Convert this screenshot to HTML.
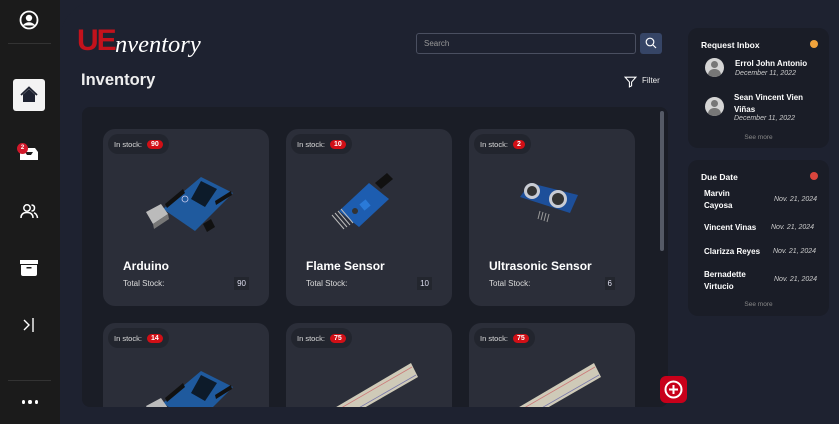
<!DOCTYPE html>
<html><head><meta charset="utf-8"><style>
*{margin:0;padding:0;box-sizing:border-box}
html,body{width:839px;height:424px;overflow:hidden}
body{background:#1e2230;font-family:"Liberation Sans",sans-serif;color:#fff;position:relative}
.abs{position:absolute}
.side{left:0;top:0;width:60px;height:424px;background:#1b1b1b}
.main{left:60px;top:0;width:779px;height:424px;background:#1e2230;border-top-left-radius:40px}
.hr{left:8px;width:43px;height:1px;background:#333}
.panel{left:82px;top:107px;width:586px;height:300px;background:#1a1d26;border-radius:8px;overflow:hidden}
.card{position:absolute;width:166px;height:177px;background:#2b2e39;border-radius:12px}
.pill{position:absolute;left:5px;top:5px;height:20px;padding:0 6px;background:#22252e;border-radius:10px;font-size:7.5px;display:flex;align-items:center;gap:5px;color:#ddd}
.pill b{background:#d10f16;color:#fff;border-radius:7px;padding:1px 4px;font-size:7px}
.ct{position:absolute;left:20px;top:130px;font-size:12px;font-weight:bold}
.ts{position:absolute;left:20px;top:150px;font-size:8px;color:#ddd;width:126px}
.ts span{position:absolute;right:0;top:-2px;background:#23262e;padding:2px 3px;color:#dde}
.rp{left:688px;width:141px;background:#1a1d27;border-radius:10px}
.rh{position:absolute;left:13px;font-size:8.5px;font-weight:bold}
.dot{position:absolute;right:11px;width:8px;height:8px;border-radius:50%}
.nm{position:absolute;font-size:8px;font-weight:bold;line-height:12px}
.dt{position:absolute;font-size:7px;font-style:italic;color:#ccc}
.av{position:absolute;left:17px;width:19px;height:19px;border-radius:50%;background:#d5d5d5;overflow:hidden}
.av:before{content:"";position:absolute;left:6px;top:3px;width:7px;height:7px;border-radius:50%;background:#777}
.av:after{content:"";position:absolute;left:3px;top:11px;width:13px;height:10px;border-radius:6px 6px 0 0;background:#777}
.sm{position:absolute;width:100%;text-align:center;font-size:6.5px;color:#888}
</style></head><body>
<div class="abs side"></div>
<div class="abs main"></div>
<div class="abs hr" style="top:43px"></div>
<div class="abs hr" style="top:380px"></div>
<svg class="abs" style="left:19px;top:10px" width="20" height="20" viewBox="0 0 20 20"><circle cx="10" cy="10" r="8.5" fill="none" stroke="#fff" stroke-width="1.8"/><circle cx="10" cy="8" r="3.2" fill="#fff"/><path d="M4.5 15.5Q10 10.5 15.5 15.5" fill="#fff" stroke="#fff" stroke-width="1.5"/></svg>
<div class="abs" style="left:13px;top:79px;width:32px;height:32px;background:#f3f3f3;border-radius:3px"></div>
<svg class="abs" style="left:19px;top:85px" width="20" height="20" viewBox="0 0 20 20"><path d="M2 10L10 2.5 18 10" fill="none" stroke="#1e2230" stroke-width="1.8"/><path d="M4 9.5V17H16V9.5L10 4Z" fill="#1e2230"/></svg>
<svg class="abs" style="left:19px;top:143px" width="20" height="20" viewBox="0 0 20 20"><path d="M1 9L4 5H16L19 9V17H1Z" fill="#fff"/><path d="M6 9H14L12 12H8Z" fill="#1b1b1b"/></svg>
<div class="abs" style="left:17px;top:143px;width:11px;height:11px;border-radius:50%;background:#d1182a;font-size:6px;font-weight:bold;text-align:center;line-height:11px">2</div>
<svg class="abs" style="left:19px;top:201px" width="20" height="20" viewBox="0 0 20 20" fill="none" stroke="#fff" stroke-width="1.5"><circle cx="8" cy="7" r="3.2"/><path d="M2 17Q2 11.5 8 11.5T14 17"/><path d="M12.5 4Q15.5 4 15.5 7T12.5 10M15 11.8Q18 12.8 18.5 17"/></svg>
<svg class="abs" style="left:19px;top:258px" width="20" height="20" viewBox="0 0 20 20"><rect x="1" y="2" width="18" height="4" fill="#fff"/><path d="M2 7H18V16Q18 18 16 18H4Q2 18 2 16Z" fill="#fff"/><rect x="7.5" y="9" width="5" height="1.5" fill="#1b1b1b"/></svg>
<svg class="abs" style="left:22px;top:316px" width="14" height="18" viewBox="0 0 14 18" fill="none" stroke="#fff" stroke-width="1.4"><path d="M2 4L7 9 2 14"/><path d="M11 2V16"/></svg>
<div class="abs" style="left:22px;top:400px;width:16px;height:6px;display:flex;gap:3px"><i style="width:4px;height:4px;border-radius:50%;background:#fff"></i><i style="width:4px;height:4px;border-radius:50%;background:#fff"></i><i style="width:4px;height:4px;border-radius:50%;background:#fff"></i></div>

<div class="abs" style="left:77px;top:25px;font-size:30px;font-weight:bold;color:#c3121c;letter-spacing:-2px;line-height:32px">UE</div>
<div class="abs" style="left:115px;top:31px;font-family:'Liberation Serif',serif;font-style:italic;font-size:24.5px;line-height:28px;color:#fff">nventory</div>
<div class="abs" style="left:81px;top:71px;font-size:16.5px;font-weight:bold;color:#eee">Inventory</div>
<div class="abs" style="left:416px;top:33px;width:220px;height:21px;border:1px solid #4a4f60;border-radius:3px;font-size:8px;color:#999;padding:5px 7px">Search</div>
<div class="abs" style="left:640px;top:33px;width:22px;height:21px;background:#364566;border-radius:3px"></div>
<svg class="abs" style="left:645px;top:37px" width="12" height="12" viewBox="0 0 12 12" fill="none" stroke="#fff" stroke-width="1.2"><circle cx="5" cy="5" r="3.8"/><path d="M8 8L11 11"/></svg>
<svg class="abs" style="left:624px;top:75px" width="13" height="13" viewBox="0 0 12 12" fill="none" stroke="#fff" stroke-width="1"><path d="M1 2H11L7 6.5V10L5 11V6.5Z"/></svg>
<div class="abs" style="left:642px;top:76px;font-size:8px;color:#eee">Filter</div>

<div class="abs panel">
 <div class="abs" style="left:578px;top:4px;width:4px;height:140px;background:#555a66;border-radius:2px"></div>
 <div class="card" style="left:21px;top:22px">
  <div class="pill">In stock: <b>90</b></div>
  <svg class="abs" style="left:40px;top:40px" width="92" height="75" viewBox="0 0 92 75"><path d="M20 40L58 8L90 24L52 62Z" fill="#1f5a9e"/><path d="M22 35L40 20L42 24L24 39Z" fill="#111"/><path d="M58 12L74 20L62 38L48 30Z" fill="#0d1b2a"/><path d="M72 32L88 22L89 26L73 36Z" fill="#111"/><path d="M3 43L18 35L25 45L10 55Z" fill="#bbb"/><path d="M10 55L25 45L26 50L11 60Z" fill="#777"/><path d="M60 55L68 50L72 58L64 63Z" fill="#111"/><circle cx="42" cy="30" r="3" fill="none" stroke="#cce" stroke-width=".8"/></svg>
  <div class="ct">Arduino</div>
  <div class="ts">Total Stock:<span>90</span></div>
 </div>
 <div class="card" style="left:204px;top:22px">
  <div class="pill">In stock: <b>10</b></div>
  <svg class="abs" style="left:45px;top:40px" width="70" height="70" viewBox="0 0 70 70"><path d="M8 42L38 14L58 30L28 58Z" fill="#1d5db0"/><path d="M44 14L56 4L62 10L50 20Z" fill="#111"/><rect x="30" y="32" width="8" height="8" fill="#2a7ad8" transform="rotate(-40 34 36)"/><circle cx="24" cy="42" r="3" fill="#333"/><path d="M4 44L16 58M7 42L19 56M10 40L22 54M1 46L13 60" stroke="#bbb" stroke-width="1"/></svg>
  <div class="ct">Flame Sensor</div>
  <div class="ts">Total Stock:<span>10</span></div>
 </div>
 <div class="card" style="left:387px;top:22px">
  <div class="pill">In stock: <b>2</b></div>
  <svg class="abs" style="left:47px;top:48px" width="70" height="50" viewBox="0 0 70 50"><path d="M4 20L14 6L62 18L54 36Z" fill="#1d4f9a"/><circle cx="16" cy="14" r="8" fill="#c9ccd4"/><circle cx="16" cy="14" r="5" fill="#333"/><circle cx="42" cy="22" r="9" fill="#c9ccd4"/><circle cx="42" cy="22" r="6" fill="#333"/><path d="M24 34L22 42M27 35L25 43M30 36L28 44M33 37L31 45" stroke="#999"/></svg>
  <div class="ct">Ultrasonic Sensor</div>
  <div class="ts">Total Stock:<span>6</span></div>
 </div>
 <div class="card" style="left:21px;top:216px">
  <div class="pill">In stock: <b>14</b></div>
  <svg class="abs" style="left:40px;top:40px" width="92" height="75" viewBox="0 0 92 75"><path d="M20 40L58 8L90 24L52 62Z" fill="#1f5a9e"/><path d="M22 35L40 20L42 24L24 39Z" fill="#111"/><path d="M58 12L74 20L62 38L48 30Z" fill="#0d1b2a"/><path d="M72 32L88 22L89 26L73 36Z" fill="#111"/><path d="M3 43L18 35L25 45L10 55Z" fill="#bbb"/></svg>
 </div>
 <div class="card" style="left:204px;top:216px">
  <div class="pill">In stock: <b>75</b></div>
  <svg class="abs" style="left:40px;top:40px" width="100" height="50" viewBox="0 0 100 50"><path d="M0 50L85 0L92 14L12 60Z" fill="#cfcab8"/><path d="M3 52L86 4" stroke="#c77" stroke-width=".8"/><path d="M10 58L90 12" stroke="#77a" stroke-width=".8"/></svg>
 </div>
 <div class="card" style="left:387px;top:216px">
  <div class="pill">In stock: <b>75</b></div>
  <svg class="abs" style="left:40px;top:40px" width="100" height="50" viewBox="0 0 100 50"><path d="M0 50L85 0L92 14L12 60Z" fill="#cfcab8"/><path d="M3 52L86 4" stroke="#c77" stroke-width=".8"/><path d="M10 58L90 12" stroke="#77a" stroke-width=".8"/></svg>
 </div>
</div>
<div class="abs" style="left:660px;top:376px;width:27px;height:27px;background:#c8001a;border-radius:6px"></div>
<svg class="abs" style="left:663px;top:379px" width="21" height="21" viewBox="0 0 21 21" fill="none" stroke="#fff" stroke-width="2"><circle cx="10.5" cy="10.5" r="8"/><path d="M10.5 6V15M6 10.5H15"/></svg>

<div class="abs rp" style="top:28px;height:120px">
 <div class="rh" style="top:12px">Request Inbox</div>
 <div class="dot" style="top:12px;background:#f0a33c"></div>
 <div class="av" style="top:30px"></div>
 <div class="nm" style="left:47px;top:30px">Errol John Antonio</div>
 <div class="dt" style="left:47px;top:42px">December 11, 2022</div>
 <div class="av" style="top:69px"></div>
 <div class="nm" style="left:46px;top:64px">Sean Vincent Vien<br>Viñas</div>
 <div class="dt" style="left:46px;top:87px">December 11, 2022</div>
 <div class="sm" style="top:106px">See more</div>
</div>
<div class="abs rp" style="top:160px;height:156px">
 <div class="rh" style="top:12px">Due Date</div>
 <div class="dot" style="top:12px;background:#d9453d"></div>
 <div class="nm" style="left:16px;top:28px">Marvin<br>Cayosa</div>
 <div class="dt" style="left:86px;top:36px">Nov. 21, 2024</div>
 <div class="nm" style="left:16px;top:62px">Vincent Vinas</div>
 <div class="dt" style="left:83px;top:64px">Nov. 21, 2024</div>
 <div class="nm" style="left:16px;top:86px">Clarizza Reyes</div>
 <div class="dt" style="left:85px;top:88px">Nov. 21, 2024</div>
 <div class="nm" style="left:16px;top:109px">Bernadette<br>Virtucio</div>
 <div class="dt" style="left:86px;top:116px">Nov. 21, 2024</div>
 <div class="sm" style="top:141px">See more</div>
</div>
</body></html>
